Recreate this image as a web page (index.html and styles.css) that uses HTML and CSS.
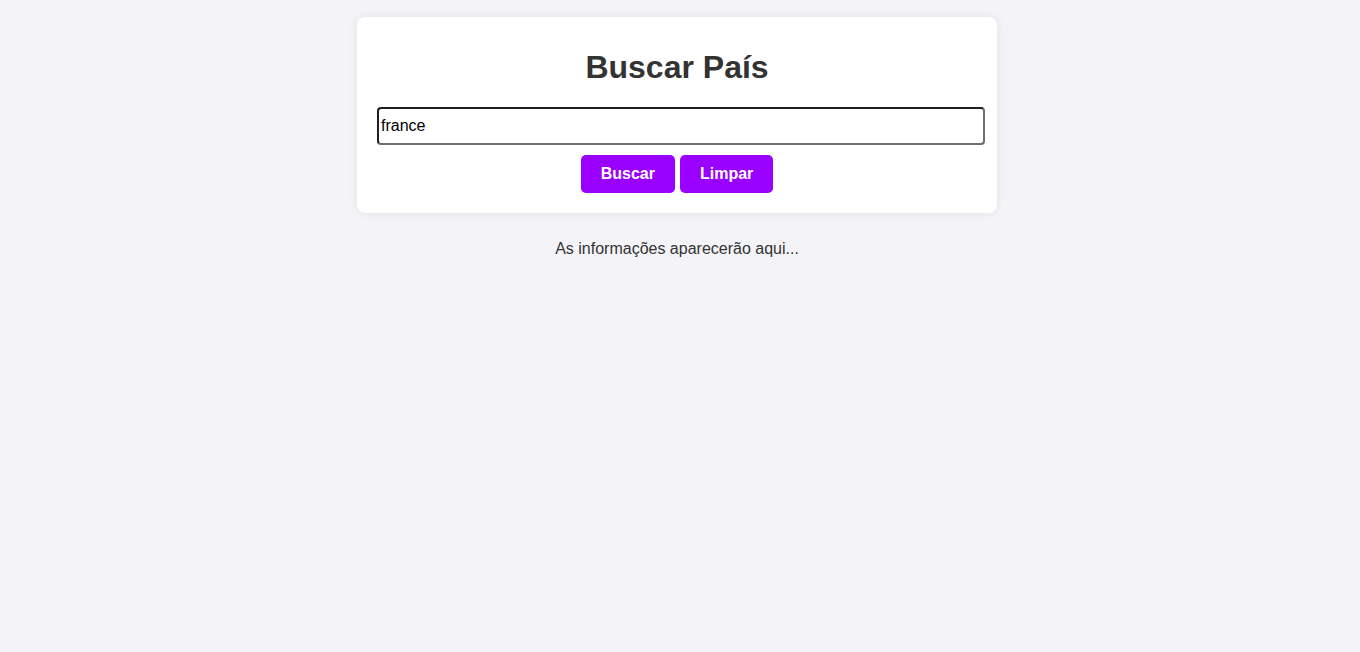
FILE: index.html
```html
<!DOCTYPE html>
<html lang="pt">
<head>
<meta charset="utf-8">
<title>Buscar País</title>
<link rel="stylesheet" href="styles.css">
</head>
<body>
<main class="page">
  <section class="card">
    <h1 class="title">Buscar País</h1>
    <input class="search" type="text" value="france">
    <div class="actions">
      <button class="btn" type="button">Buscar</button>
      <button class="btn" type="button">Limpar</button>
    </div>
  </section>
  <p class="result">As informações aparecerão aqui...</p>
</main>
</body>
</html>
```
FILE: styles.css
```css
html, body {
  margin: 0;
  padding: 0;
}
body {
  background: #f4f4f8;
  font-family: "Liberation Sans", Arial, sans-serif;
  color: #333;
}
.page {
  display: flex;
  flex-direction: column;
  align-items: center;
  padding-top: 17px;
  padding-right: 6px;
}
.card {
  width: 600px;
  background: #fff;
  border-radius: 8px;
  box-shadow: 0 0 10px rgba(0, 0, 0, 0.08);
  padding: 32px 20px 20px;
  text-align: center;
}
.title {
  margin: 0 0 21px;
  font-size: 32px;
  font-weight: bold;
  color: #333;
  line-height: 37px;
}
.search {
  display: block;
  box-sizing: border-box;
  width: 608px;
  height: 38px;
  padding: 0 2px;
  font-family: "Liberation Sans", Arial, sans-serif;
  font-size: 16px;
  color: #000;
  border: 2px solid;
  border-color: #1f1f1f #6e6e6e #6e6e6e #1f1f1f;
  border-radius: 4px;
  background: #fff;
  outline: none;
}
.actions {
  display: flex;
  justify-content: center;
  gap: 5px;
  margin-top: 10px;
}
.btn {
  font-family: "Liberation Sans", Arial, sans-serif;
  font-size: 16px;
  font-weight: bold;
  color: #fff;
  background: #9900ff;
  border: none;
  border-radius: 5px;
  padding: 0 20px;
  height: 38px;
  line-height: 38px;
  cursor: pointer;
}
.result {
  margin: 27px 0 0;
  font-size: 16px;
  line-height: 18px;
  color: #333;
}
```
